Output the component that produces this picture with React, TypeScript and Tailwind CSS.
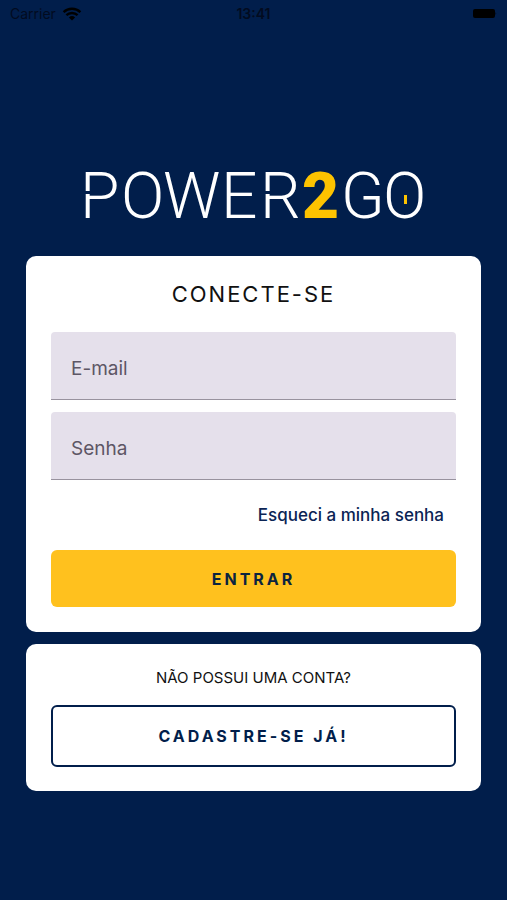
import React from "react";

function StatusBar() {
  return (
    <header className="grid h-7 grid-cols-3 items-center px-[10px] text-sm text-[#020b1f]">
      <div className="flex items-center gap-[6px]">
        <span>Carrier</span>
        <svg viewBox="0 0 20 14" className="h-[14px] w-5" aria-hidden="true">
          <path d="M10 13.5 6.9 10.4a4.6 4.6 0 0 1 6.2 0Z" fill="#000" />
          <path
            d="M4.4 8.2a8.2 8.2 0 0 1 11.2 0M1.6 5.1a12.4 12.4 0 0 1 16.8 0"
            fill="none"
            stroke="#000"
            strokeWidth="2.4"
          />
        </svg>
      </div>
      <time className="text-center font-semibold">13:41</time>
      <svg viewBox="0 0 24 10" className="h-[10px] w-6 justify-self-end" aria-hidden="true">
        <rect width="22" height="9" rx="2" fill="#000" />
        <path d="M22.6 3q1.2 1.6 0 3.2Z" fill="#000" />
      </svg>
    </header>
  );
}

function Logo() {
  return (
    <svg viewBox="0 0 360 84" className="h-[84px] w-[360px]" role="img" aria-label="POWER2GO">
      <g fill="#fff" fontSize="64" fontWeight="300" fontFamily="Roboto, sans-serif">
        <text y="65" x="6 47 89 147 186">POWER</text>
        <text y="65" x="228" fill="#fdc300" fontWeight="900">2</text>
        <text y="65" x="267 309">GO</text>
      </g>
      <path d="M9 38h8v3H9zM189 38h8v3h-8z" fill="#011e4b" />
      <path d="M330 42h3v9h-3z" fill="#fdc300" />
    </svg>
  );
}

const field =
  "block h-[68px] w-full rounded-t-sm border-b border-[#98929e] bg-[#e5e0eb] px-5 pt-[6px] text-[19px] text-[#4c4553] outline-none placeholder:text-[#5d5665] placeholder:opacity-100";

export default function App() {
  return (
    <div className="flex min-h-screen flex-col bg-[#011e4b] font-['Inter',sans-serif]">
      <StatusBar />
      <main className="flex grow flex-col items-center px-[26px] pt-[125px] pb-24">
        <h1>
          <Logo />
        </h1>
        <section className="mt-[19px] w-full rounded-[10px] bg-white p-[25px]">
          <h2 className="text-center text-[22px] leading-[26px] tracking-[2px] text-[#111]">CONECTE-SE</h2>
          <form className="mt-[25px] flex flex-col" onSubmit={(e) => e.preventDefault()}>
            <div className="flex flex-col gap-3">
              <input type="email" aria-label="E-mail" placeholder="E-mail" className={field} />
              <input type="password" aria-label="Senha" placeholder="Senha" className={field} />
            </div>
            <a href="#senha" className="mt-[23px] mr-3 self-end text-[17px] leading-6 font-medium text-[#0b2454]">
              Esqueci a minha senha
            </a>
            <button
              type="submit"
              className="mt-[23px] h-[57px] rounded-md bg-[#ffc11e] text-base font-bold tracking-[3px] text-[#0b2440]"
            >
              ENTRAR
            </button>
          </form>
        </section>
        <section className="mt-3 w-full rounded-[10px] bg-white px-[25px] py-6 text-center">
          <p className="text-[15px] leading-5 text-[#111]">NÃO POSSUI UMA CONTA?</p>
          <button
            type="button"
            className="mt-[17px] h-[62px] w-full rounded-md border-2 border-[#011e4b] text-base font-bold tracking-[3px] text-[#011e4b]"
          >
            CADASTRE-SE JÁ!
          </button>
        </section>
      </main>
    </div>
  );
}
